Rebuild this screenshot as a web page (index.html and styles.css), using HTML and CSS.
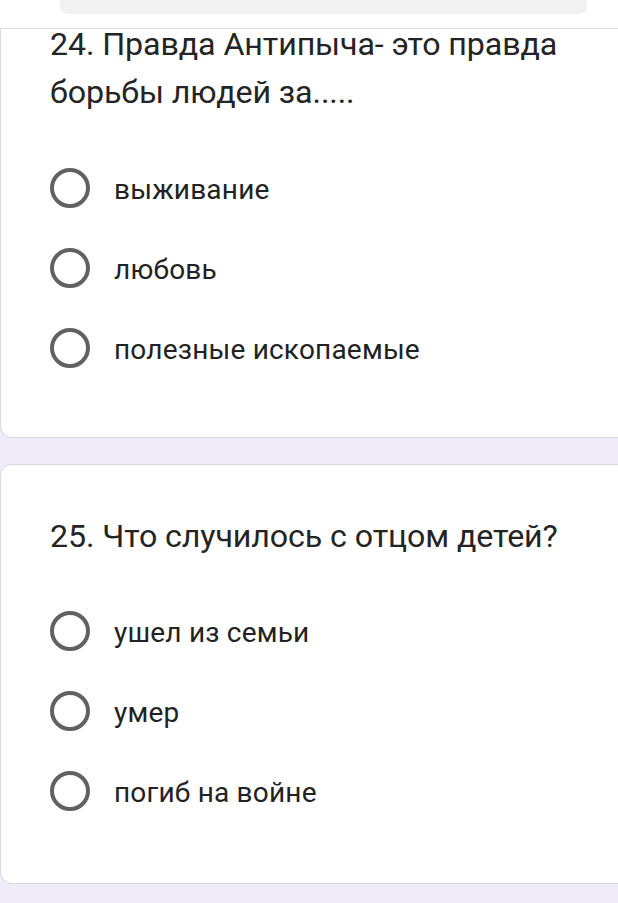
FILE: index.html
```html
<!DOCTYPE html>
<html lang="ru">
<head>
<meta charset="utf-8">
<title>Форма</title>
<link rel="stylesheet" href="styles.css">
</head>
<body>
<div class="page">
  <div class="topstrip">
    <div class="greybar"></div>
  </div>
  <section class="card card-first">
    <div class="question q-first">24. Правда Антипыча- это правда борьбы людей за.....</div>
    <div class="options">
      <label class="option"><span class="radio"></span><span class="opt-text">выживание</span></label>
      <label class="option"><span class="radio"></span><span class="opt-text">любовь</span></label>
      <label class="option"><span class="radio"></span><span class="opt-text">полезные ископаемые</span></label>
    </div>
  </section>
  <section class="card card-second">
    <div class="question">25. Что случилось с отцом детей?</div>
    <div class="options options-second">
      <label class="option"><span class="radio"></span><span class="opt-text">ушел из семьи</span></label>
      <label class="option"><span class="radio"></span><span class="opt-text">умер</span></label>
      <label class="option"><span class="radio"></span><span class="opt-text">погиб на войне</span></label>
    </div>
  </section>
</div>
</body>
</html>
```
FILE: styles.css
```css
html, body {
  margin: 0;
  padding: 0;
}
body {
  background: #efebf8;
  overflow: hidden;
  font-family: Roboto, "Noto Sans", sans-serif;
  color: #202124;
}
.page {
  width: 618px;
  height: 903px;
  overflow: hidden;
}
.topstrip {
  background: #ffffff;
  height: 28px;
  padding: 0 31px 0 60px;
  position: relative;
  z-index: 1;
}
.greybar {
  height: 14px;
  background: #f1f1f2;
  border-radius: 0 0 8px 8px;
}
.card {
  background: #ffffff;
  border: 1px solid #d9d8dc;
  margin-right: -30px;
  padding-left: 49px;
}
.card-first {
  border-top-left-radius: 0;
  border-bottom-left-radius: 12px;
  padding-top: 0;
  padding-bottom: 49px;
  border-top-color: #e2e2e4;
}
.card-second {
  margin-top: 26px;
  border-radius: 12px;
  padding-top: 47px;
  padding-bottom: 52px;
}
.question {
  font-size: 32.2px;
  line-height: 48px;
  width: 540px;
  color: #242424;
  letter-spacing: -0.1px;
}
.q-first {
  margin-top: -9px;
}
.options {
  margin-top: 32px;
  display: flex;
  flex-direction: column;
}
.options-second {
  margin-top: 31px;
}
.option {
  height: 80px;
  display: flex;
  align-items: center;
  gap: 24px;
}
.radio {
  box-sizing: border-box;
  width: 40px;
  height: 40px;
  border: 4.5px solid #606163;
  border-radius: 50%;
  flex: none;
}
.opt-text {
  font-size: 28px;
  color: #222222;
  letter-spacing: 0.2px;
  padding-top: 2px;
}
```
